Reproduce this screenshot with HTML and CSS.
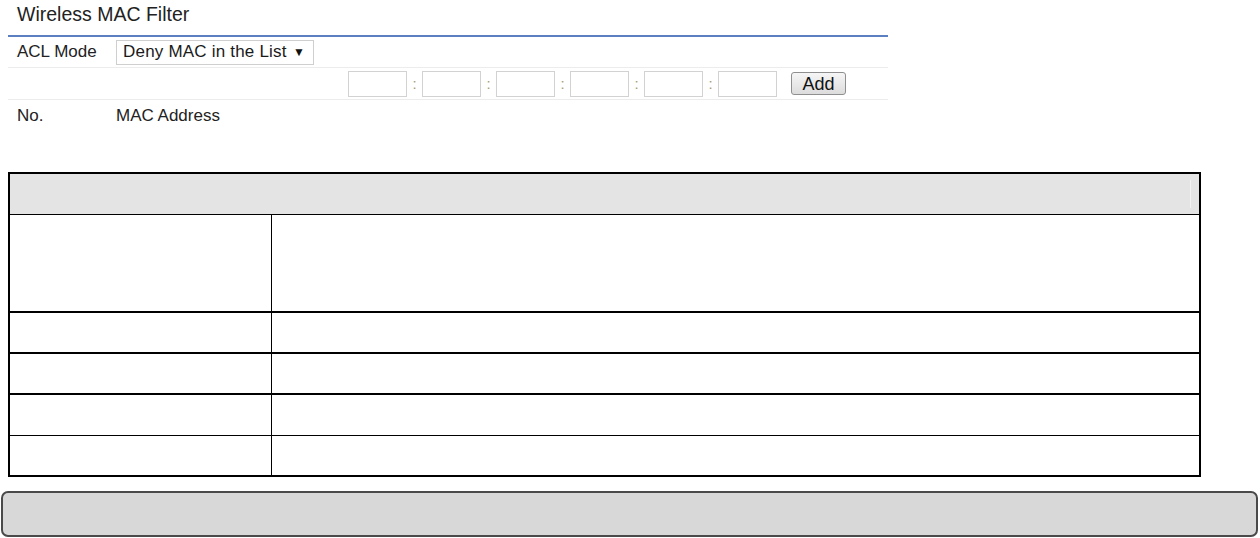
FILE: index.html
```html
<!doctype html>
<html>
  <head>
    <meta charset='utf-8'>
    <title>Wireless MAC Filter</title>
    <link rel="stylesheet" href="styles.css">
  </head>
  <body>

    <div id='panel'>
      <div class='panel-title'>Wireless MAC Filter</div>

      <div class='row row-mode'>
        <span class='label'>ACL Mode</span>
        <div class='select'>
          <span>Deny MAC in the List</span>
          <span class='caret'>&#9660;</span>
        </div>
      </div>

      <div class='row row-mac'>
        <input class='octet' type='text' maxlength='2'>
        <span class='sep'>:</span>
        <input class='octet' type='text' maxlength='2'>
        <span class='sep'>:</span>
        <input class='octet' type='text' maxlength='2'>
        <span class='sep'>:</span>
        <input class='octet' type='text' maxlength='2'>
        <span class='sep'>:</span>
        <input class='octet' type='text' maxlength='2'>
        <span class='sep'>:</span>
        <input class='octet' type='text' maxlength='2'>
        <button class='btn'>Add</button>
      </div>

      <div class='row row-head'>
        <span class='label'>No.</span>
        <span>MAC Address</span>
      </div>
    </div>

    <div class='info'>
      <div class='info-head'><span class='info-rule'></span></div>
      <div class='info-row tall'><div class='info-key'></div><div></div></div>
      <div class='info-row thick'><div class='info-key'></div><div></div></div>
      <div class='info-row thick'><div class='info-key'></div><div></div></div>
      <div class='info-row thin'><div class='info-key'></div><div></div></div>
      <div class='info-row last'><div class='info-key'></div><div></div></div>
    </div>

    <div class='note'></div>

  </body>
</html>
```

FILE: styles.css
```css
* {
  box-sizing: border-box;
}

html, body {
  margin: 0;
  overflow: hidden;
}

body {
  font-family: 'Liberation Sans', Arial, sans-serif;
  font-size: 17px;
  color: #222;
  background: #fff;
}

#panel {
  margin-left: 8px;
  width: 880px;
}

.panel-title {
  height: 37px;
  padding: 3px 0 0 9px;
  font-size: 19.5px;
  line-height: 22px;
  border-bottom: 2px solid #5b7fc0;
}

.row {
  display: flex;
  align-items: center;
  padding-left: 9px;
}

.row-mode {
  height: 31px;
  border-bottom: 1px solid #ececec;
}

.row-mac {
  height: 32px;
  padding-left: 340px;
  border-bottom: 1px solid #ececec;
}

.row-head {
  height: 31px;
}

.label {
  width: 99px;
}

.select {
  display: flex;
  align-items: center;
  justify-content: space-between;
  width: 198px;
  height: 25px;
  padding: 0 8px 0 6px;
  border: 1px solid #cfcfcf;
  color: #1a1a1a;
  letter-spacing: 0.2px;
}

.caret {
  font-size: 12px;
  color: #111;
}

.octet {
  width: 59px;
  height: 26px;
  margin: 0;
  padding: 0 3px;
  border: 1px solid #d2d2d2;
  font: inherit;
}

.sep {
  width: 15px;
  text-align: center;
  font-size: 15px;
  color: #a89a70;
}

.btn {
  width: 55px;
  height: 23px;
  margin-left: 14px;
  padding: 0;
  font: inherit;
  font-size: 18px;
  line-height: 20px;
  color: #111;
  border: 1px solid #8f8f8f;
  border-radius: 3px;
  background: linear-gradient(#f6f6f6, #dcdcdc);
}

.info {
  margin: 41px 0 0 8px;
  width: 1193px;
  border: 2px solid #000;
}

.info-head {
  display: flex;
  align-items: center;
  justify-content: flex-end;
  height: 41px;
  padding-right: 8px;
  background: #e4e4e4;
  border-bottom: 1px solid #000;
}

.info-rule {
  width: 1px;
  height: 28px;
  background: #f3f3f3;
}

.info-row {
  display: grid;
  grid-template-columns: 262px 1fr;
}

.info-key {
  border-right: 1px solid #000;
}

.tall {
  height: 98px;
  border-bottom: 2px solid #000;
}

.thick {
  height: 41px;
  border-bottom: 2px solid #000;
}

.thin {
  height: 41px;
  border-bottom: 1px solid #000;
}

.last {
  height: 39px;
}

.note {
  margin: 14px 0 0 1px;
  width: 1257px;
  height: 46px;
  border: 2px solid #4a4a4a;
  border-radius: 7px;
  background: #d8d8d8;
}
```
